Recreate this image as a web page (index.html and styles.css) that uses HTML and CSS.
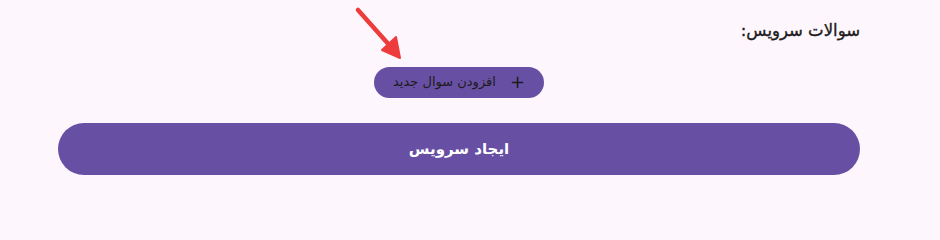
FILE: index.html
```html
<!DOCTYPE html>
<html lang="fa" dir="rtl">
<head>
<meta charset="utf-8">
<link rel="stylesheet" href="styles.css">
</head>
<body>
<div class="page">
  <div class="form">
    <h3 class="section-title">سوالات سرویس:</h3>
    <div class="add-row">
      <button class="add-btn" type="button"><span class="plus">+</span><span>افزودن سوال جدید</span></button>
      <svg class="arrow" width="60" height="62" viewBox="0 0 60 62">
        <line x1="8" y1="8" x2="41" y2="45" stroke="#ee3b3b" stroke-width="4.5" stroke-linecap="round"/>
        <polygon points="50,56 32,48 46,35" fill="#ee3b3b" stroke="#ee3b3b" stroke-width="2" stroke-linejoin="round"/>
      </svg>
    </div>
    <button class="submit-btn" type="button">ایجاد سرویس</button>
  </div>
</div>
</body>
</html>
```

FILE: styles.css
```css
html, body {
  margin: 0;
  padding: 0;
  background: #fdf7fd;
}
body {
  font-family: "DejaVu Sans", "Noto Sans", sans-serif;
  color: #1d1b20;
}
.page {
  width: 940px;
  height: 224px;
  padding: 0 80px 0 58px;
  box-sizing: border-box;
}
.form {
  display: flex;
  flex-direction: column;
  padding-top: 20px;
}
.section-title {
  margin: 0;
  font-size: 16.5px;
  font-weight: 400;
  line-height: 22px;
  height: 22px;
  -webkit-text-stroke: 0.35px #1d1b20;
}
.add-row {
  position: relative;
  display: flex;
  justify-content: center;
  margin-top: 25px;
}
.add-btn {
  display: flex;
  align-items: center;
  justify-content: center;
  gap: 14px;
  width: 170px;
  height: 31px;
  border: none;
  border-radius: 16px;
  background: #6750a4;
  color: #1d1b20;
  font-family: inherit;
  font-size: 13px;
  padding: 0 0 2px;
}
.plus {
  font-size: 18px;
  line-height: 1;
  font-weight: 400;
}
.arrow {
  position: absolute;
  left: 292px;
  top: -65px;
}
.submit-btn {
  margin-top: 25px;
  height: 52px;
  border: none;
  border-radius: 26px;
  background: #6750a4;
  color: #ffffff;
  font-family: inherit;
  font-size: 15px;
  font-weight: 700;
  padding: 0 0 1px;
}
```
